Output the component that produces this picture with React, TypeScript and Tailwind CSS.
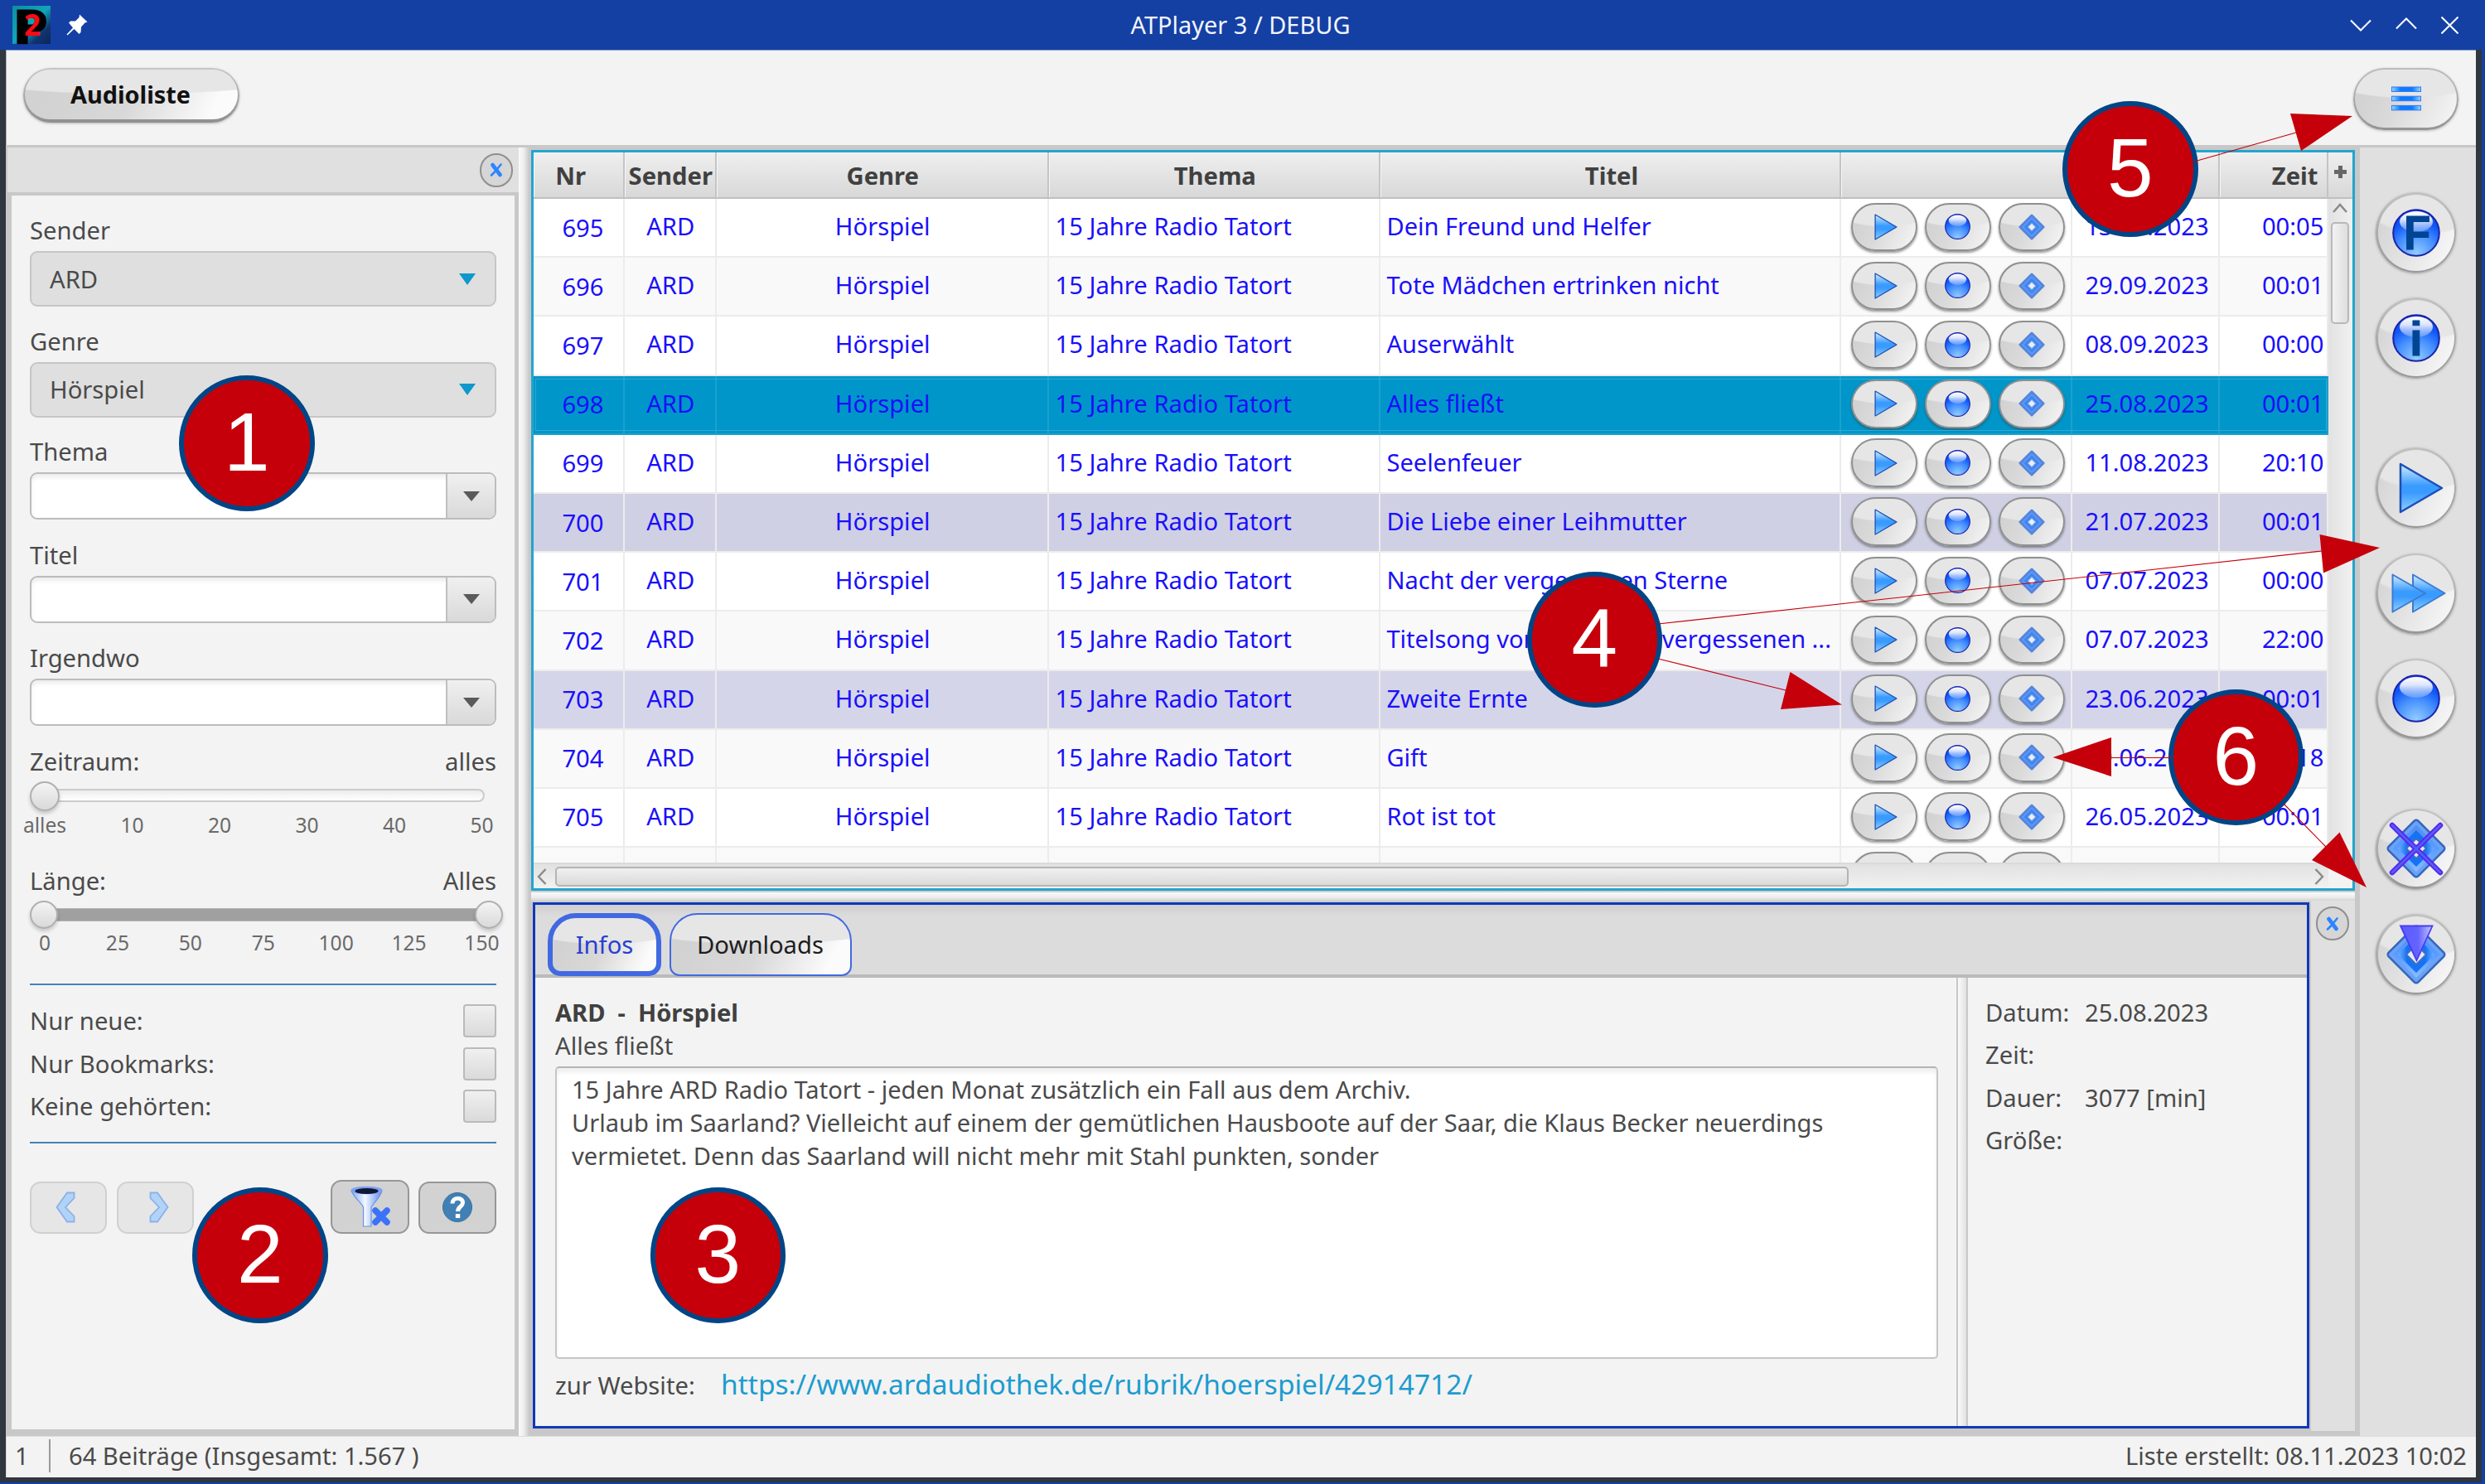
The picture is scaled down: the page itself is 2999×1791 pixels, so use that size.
import React from "react";
import type { ReactNode } from "react";

type Row = { nr: string; titel: string; datum: string; zeit: string; tone: string };

const rows: Row[] = [
  { nr: "695", titel: "Dein Freund und Helfer", datum: "13.10.2023", zeit: "00:05", tone: "bg-white" },
  { nr: "696", titel: "Tote Mädchen ertrinken nicht", datum: "29.09.2023", zeit: "00:01", tone: "bg-[#f9f9f9]" },
  { nr: "697", titel: "Auserwählt", datum: "08.09.2023", zeit: "00:00", tone: "bg-white" },
  { nr: "698", titel: "Alles fließt", datum: "25.08.2023", zeit: "00:01", tone: "selected" },
  { nr: "699", titel: "Seelenfeuer", datum: "11.08.2023", zeit: "20:10", tone: "bg-white" },
  { nr: "700", titel: "Die Liebe einer Leihmutter", datum: "21.07.2023", zeit: "00:01", tone: "bg-[#d0d0e4]" },
  { nr: "701", titel: "Nacht der vergessenen Sterne", datum: "07.07.2023", zeit: "00:00", tone: "bg-white" },
  { nr: "702", titel: "Titelsong von Nacht der vergessenen ...", datum: "07.07.2023", zeit: "22:00", tone: "bg-[#f9f9f9]" },
  { nr: "703", titel: "Zweite Ernte", datum: "23.06.2023", zeit: "00:01", tone: "bg-[#d5d5e9]" },
  { nr: "704", titel: "Gift", datum: "09.06.2023", zeit: "00:18", tone: "bg-[#f9f9f9]" },
  { nr: "705", titel: "Rot ist tot", datum: "26.05.2023", zeit: "00:01", tone: "bg-white" },
];

const columns = "grid grid-cols-[109.5px_111.5px_400.5px_400.5px_556px_279px_178px_130.5px]";
const gloss =
  "bg-[radial-gradient(ellipse_90%_50%_at_50%_0%,#e6e6e6_96%,transparent_100%),linear-gradient(115deg,#d2d2d2_15%,#d8d8d8_50%,#fbfbfb_88%)]";
const softGloss =
  "bg-[radial-gradient(ellipse_90%_50%_at_50%_0%,#e6e6e6_94%,transparent_100%),linear-gradient(115deg,#d2d2d2_15%,#dadada_45%,#f4f4f4_95%)]";

function Defs() {
  return (
    <svg className="absolute h-0 w-0" aria-hidden="true">
      <defs>
        <linearGradient id="playFill" x1="0" y1="0" x2="0" y2="1">
          <stop offset="0" stopColor="#d5efff" />
          <stop offset="0.45" stopColor="#3a9bff" />
          <stop offset="0.6" stopColor="#3a9bff" />
          <stop offset="1" stopColor="#8fd0ff" />
        </linearGradient>
        <radialGradient id="ballFill" cx="0.5" cy="0.95" r="0.85">
          <stop offset="0" stopColor="#93ccff" />
          <stop offset="0.5" stopColor="#4690ff" />
          <stop offset="0.85" stopColor="#0d55f5" />
          <stop offset="1" stopColor="#1a4cf0" />
        </radialGradient>
        <linearGradient id="ballShine" x1="0" y1="0" x2="0" y2="1">
          <stop offset="0" stopColor="#ffffff" />
          <stop offset="0.4" stopColor="#ffffff" stopOpacity="0.85" />
          <stop offset="1" stopColor="#ffffff" stopOpacity="0.2" />
        </linearGradient>
        <linearGradient id="diamondFill" x1="0" y1="0" x2="0" y2="1">
          <stop offset="0" stopColor="#4f8cf0" />
          <stop offset="0.5" stopColor="#5a9bff" />
          <stop offset="1" stopColor="#8fc0ff" />
        </linearGradient>
        <linearGradient id="diamondInner" x1="0" y1="0" x2="1" y2="0">
          <stop offset="0" stopColor="#6fb2ff" />
          <stop offset="0.25" stopColor="#1572f5" />
          <stop offset="0.75" stopColor="#1572f5" />
          <stop offset="1" stopColor="#6fb2ff" />
        </linearGradient>
        <linearGradient id="barFill" x1="0" y1="0" x2="1" y2="0">
          <stop offset="0" stopColor="#8fd8ff" />
          <stop offset="0.3" stopColor="#0a7cff" />
          <stop offset="0.7" stopColor="#0a7cff" />
          <stop offset="1" stopColor="#8fd8ff" />
        </linearGradient>
        <linearGradient id="arrowFill" x1="0" y1="0" x2="1" y2="0">
          <stop offset="0" stopColor="#5b5bff" />
          <stop offset="0.55" stopColor="#6363ff" />
          <stop offset="1" stopColor="#c9c9ff" />
        </linearGradient>
        <linearGradient id="funnelFill" x1="0" y1="0" x2="1" y2="0">
          <stop offset="0" stopColor="#7ea6f7" />
          <stop offset="0.45" stopColor="#f2f8ff" />
          <stop offset="1" stopColor="#5f8cf0" />
        </linearGradient>
        <linearGradient id="logoFill" x1="0" y1="0" x2="1" y2="1">
          <stop offset="0" stopColor="#0c8fa3" />
          <stop offset="0.5" stopColor="#12a5b8" />
          <stop offset="0.75" stopColor="#10356f" />
          <stop offset="1" stopColor="#0d2558" />
        </linearGradient>
      </defs>
    </svg>
  );
}

function PlayIcon({ className }: { className: string }) {
  return (
    <svg className={className} viewBox="0 0 54 62">
      <path d="M2 2 52 31 2 60Z" fill="url(#playFill)" stroke="#1d4fb5" strokeWidth="2.5" strokeLinejoin="round" />
    </svg>
  );
}

function BallIcon({ className, letter }: { className: string; letter?: string }) {
  return (
    <svg className={`overflow-visible ${className}`} viewBox="0 0 58 58">
      <circle cx="29" cy="29" r="27.8" fill="url(#ballFill)" stroke="#1c22a8" strokeWidth="2" />
      <ellipse cx="29" cy="15.5" rx="20" ry="12.5" fill="url(#ballShine)" />
      {letter === "F" && (
        <text x="32.5" y="49" transform="scale(.93 1)" textAnchor="middle" fill="#004494" stroke="#004494" strokeWidth="1" className="font-['Liberation_Sans'] text-[57px] font-bold">F</text>
      )}
      {letter === "i" && (
        <text x="29" y="50" textAnchor="middle" fill="#004494" stroke="#004494" strokeWidth="1" className="font-['Liberation_Sans'] text-[57px] font-bold">i</text>
      )}
    </svg>
  );
}

function Diamond() {
  return (
    <>
      <path d="M36 5 67 36 36 67 5 36Z" fill="url(#diamondFill)" stroke="#3566bd" strokeWidth="9" strokeLinejoin="round" />
      <path d="M36 5 67 36 36 67 5 36Z" fill="url(#diamondFill)" stroke="#6aa2f6" strokeWidth="4" strokeLinejoin="round" />
      <path d="M36 14 58 36 36 58 14 36Z" fill="url(#diamondInner)" />
      <path d="M36 24 48 36 36 48 24 36Z" fill="#e4e8f2" stroke="#3d6fc0" strokeWidth="2" />
    </>
  );
}

function SmallDiamond() {
  return (
    <svg className="h-8 w-8" viewBox="0 0 32 32">
      <path d="M16 2 30 16 16 30 2 16Z" fill="#5d9af8" stroke="#5585dc" strokeWidth="3" strokeLinejoin="round" />
      <path d="M16 6.5 25.5 16 16 25.5 6.5 16Z" fill="#3d84f2" />
      <path d="M16 11 21 16 16 21 11 16Z" fill="#eceef4" stroke="#6b9ae6" strokeWidth="1.2" strokeLinejoin="round" />
    </svg>
  );
}

function CloseButton() {
  return (
    <div className="flex h-[41px] w-[40px] items-center justify-center rounded-full border-[2.5px] border-[#8f8f8f] bg-[#d6d6d6]">
      <svg className="h-[18px] w-4" viewBox="0 0 16 18" fill="none" stroke="#2b86ff">
        <path d="M3.5 3 12.5 15" strokeWidth="4.6" strokeLinecap="round" />
        <path d="M13.5 2.5 9 8M7 10.5 2 15.5" strokeWidth="2.6" strokeLinecap="round" />
      </svg>
    </div>
  );
}

function RowButton({ children }: { children: ReactNode }) {
  return (
    <div className={`flex h-[58.5px] w-[79.5px] items-center justify-center rounded-[30px] border-[2.5px] border-[#8e9090] shadow-[0_2px_3px_rgba(60,60,60,0.55)] ${softGloss}`}>
      {children}
    </div>
  );
}

function RowButtons() {
  return (
    <div className="flex gap-[9.7px] pt-[4.5px] pl-3">
      <RowButton>
        <PlayIcon className="ml-1 h-8 w-[28px]" />
      </RowButton>
      <RowButton>
        <BallIcon className="h-[31px] w-[31px]" />
      </RowButton>
      <RowButton>
        <SmallDiamond />
      </RowButton>
    </div>
  );
}

function HeadCell({ children, className = "" }: { children?: ReactNode; className?: string }) {
  return (
    <div className={`flex items-center border-r-2 border-[#c4c4c4] pt-px shadow-[inset_1px_1px_0_#f6f6f6] ${className}`}>{children}</div>
  );
}

function TableRow({ row }: { row: Row }) {
  const selected = row.tone === "selected";
  const line = selected ? "border-[#1ba0ce]" : "border-[#ececec]";
  const cell = `flex items-center border-r-2 pb-[3px] ${line}`;
  return (
    <div className={`relative h-[71.2px] shrink-0 border-b-2 ${columns} ${selected ? "border-[#1ba0ce] bg-[#0096c9]" : `border-[#ececec] ${row.tone}`}`}>
      {selected && <div className="absolute inset-x-0.5 inset-y-[3px] border border-[#2fa7d3]" />}
      <div className={`flex items-center justify-end border-r-2 pr-[23px] ${line}`}>{row.nr}</div>
      <div className={`${cell} justify-center pl-0.5`}>ARD</div>
      <div className={`${cell} justify-center pl-0.5`}>Hörspiel</div>
      <div className={`${cell} pl-[8px]`}>15 Jahre Radio Tatort</div>
      <div className={`${cell} pl-[7.5px] text-[29px] whitespace-nowrap`}>{row.titel}</div>
      <div className={`border-r-2 ${line}`}>
        <RowButtons />
      </div>
      <div className={`${cell} justify-center pl-1`}>{row.datum}</div>
      <div className={`${cell} justify-end pr-[3px]`}>{row.zeit}</div>
    </div>
  );
}

function Choice({ label, value }: { label: string; value: string }) {
  return (
    <div className="h-[133.6px]">
      <div className="h-[45px] leading-10">{label}</div>
      <div className="flex h-[67px] items-center justify-between rounded-[9px] border-2 border-[#c6c6c6] bg-[#dfdfdf] pr-[23px] pl-[22px]">
        <span className="leading-10">{value}</span>
        <svg className="h-3.5 w-5" viewBox="0 0 20 14">
          <path d="M0 0H20L10 14Z" fill="#0e98cb" />
        </svg>
      </div>
    </div>
  );
}

function Editable({ label }: { label: string }) {
  return (
    <div className="h-[124.6px]">
      <div className="h-[45px] leading-10">{label}</div>
      <div className="flex h-[57px] rounded-[9px] border-2 border-[#bcbcbc] bg-white shadow-[inset_0_4px_5px_#ededed]">
        <div className="flex-1" />
        <div className="flex w-[59px] items-center justify-center rounded-r-[7px] border-l-2 border-[#c0c0c0] bg-linear-to-b from-[#f0f0f0] to-[#d9d9d9]">
          <svg className="h-3 w-5" viewBox="0 0 20 12">
            <path d="M0 0H20L10 12Z" fill="#5a5a5a" />
          </svg>
        </div>
      </div>
    </div>
  );
}

function Ticks({ values }: { values: string[] }) {
  return (
    <div className="mr-[17.5px] ml-[18px] flex justify-between text-[24.6px] leading-[34px] text-[#6a6a6a]">
      {values.map((v) => (
        <div key={v} className="flex w-0 justify-center">
          {v}
        </div>
      ))}
    </div>
  );
}

const thumb =
  "rounded-full border-2 border-[#b0b0b0] bg-linear-to-b from-[#f4f4f4] to-[#d9d9d9] shadow-[0_3px_4px_rgba(0,0,0,0.18)]";

function CheckLine({ label }: { label: string }) {
  return (
    <div className="flex h-[51.4px] items-center justify-between">
      <span className="leading-10">{label}</span>
      <div className="h-10 w-10 rounded border-2 border-[#bababa] bg-linear-to-b from-[#f0f0f0] to-[#dadada]" />
    </div>
  );
}

function FilterPanel() {
  return (
    <div className="flex w-[618px] flex-col border-l border-[#c8c8c8]">
      <div className="flex h-[54px] items-center justify-end bg-[#e0e0e0] pr-[7px]">
        <CloseButton />
      </div>
      <div className="flex-1 border-4 border-r-[5px] border-b-8 border-l-[5px] border-[#c8c8c8] bg-[#f3f3f3]">
        <div className="flex w-[585px] flex-col pt-[22px] pl-[22px]">
          <Choice label="Sender" value="ARD" />
          <Choice label="Genre" value="Hörspiel" />
          <Editable label="Thema" />
          <Editable label="Titel" />
          <Editable label="Irgendwo" />
          <div className="flex justify-between leading-10">
            <span>Zeitraum:</span>
            <span>alles</span>
          </div>
          <div className="relative flex h-10 items-center pt-0.5">
            <div className="mr-[14px] ml-4 h-4 flex-1 rounded-full border-2 border-[#cbcbcb] bg-linear-to-b from-[#ececec] to-white" />
            <div className={`absolute top-[4px] left-0 h-[36px] w-[36px] ${thumb}`} />
          </div>
          <Ticks values={["alles", "10", "20", "30", "40", "50"]} />
          <div className="mt-[30.500px] flex justify-between leading-10">
            <span>Länge:</span>
            <span>Alles</span>
          </div>
          <div className="relative flex h-[38px] items-center pt-[3px]">
            <div className="mr-[8px] ml-4 h-4 flex-1 border-y border-[#b5b5b5] bg-[#a0a0a0]" />
            <div className={`absolute top-[4px] left-0 h-[34px] w-[34px] ${thumb}`} />
            <div className={`absolute top-[4px] -right-2 h-[34px] w-[34px] ${thumb}`} />
          </div>
          <Ticks values={["0", "25", "50", "75", "100", "125", "150"]} />
          <div className="mt-8 h-0.5 bg-[#4183bb]" />
          <div className="my-[17px]">
            <CheckLine label="Nur neue:" />
            <CheckLine label="Nur Bookmarks:" />
            <CheckLine label="Keine gehörten:" />
          </div>
          <div className="h-0.5 bg-[#4183bb]" />
          <div className="mt-[44px] flex h-[65px] items-end">
            <div className="flex h-[63px] w-[93px] items-center justify-center rounded-[13px] border-2 border-[#d0d0d0] bg-[#e6e6e6] pr-2">
              <svg className="h-[38px] w-6" viewBox="0 0 24 38">
                <path d="M14 1.5H22.5V8L12 19 22.5 30V36.5H14L1.5 19Z" fill="#b0d4f8" stroke="#8db0e8" strokeWidth="1.8" />
              </svg>
            </div>
            <div className="ml-3 flex h-[63px] w-[93px] items-center justify-center rounded-[13px] border-2 border-[#d0d0d0] bg-[#e6e6e6] pl-2">
              <svg className="h-[38px] w-6" viewBox="0 0 24 38">
                <path d="M10 1.5H1.5V8L12 19 1.5 30V36.5H10L22.5 19Z" fill="#b0d4f8" stroke="#8db0e8" strokeWidth="1.8" />
              </svg>
            </div>
            <div className="ml-auto flex h-[65px] w-[95px] items-center justify-center rounded-[13px] border-[2.5px] border-[#979797] bg-[#d2d2d2]">
              <svg className="h-[50px] w-[50px]" viewBox="0 0 50 50">
                <path d="M2 6C6 16 14 20 16.500 26V49H26V26C29 20 36 16 39 6Z" fill="url(#funnelFill)" stroke="#6e93e6" strokeWidth="1.2" />
                <ellipse cx="20.500" cy="5.500" rx="19" ry="4.800" fill="#7fa2f2" />
                <ellipse cx="20.500" cy="6.500" rx="14" ry="3.400" fill="#101838" />
                <path d="M31 30 45 44M45 30 31 44" stroke="#3c72f8" strokeWidth="7.500" strokeLinecap="round" />
              </svg>
            </div>
            <div className="ml-[11px] flex h-[63px] w-[94px] items-center justify-center rounded-[13px] border-[2.5px] border-[#979797] bg-[#d2d2d2]">
              <svg className="h-[38px] w-[38px]" viewBox="0 0 38 38">
                <circle cx="19" cy="19" r="17.500" fill="#4080b4" stroke="#3a6f9e" />
                <path d="M13 14.500C13 6.500 25.500 6.500 25.500 13.500 25.500 18 19.500 18.500 19.500 24" fill="none" stroke="#fff" strokeWidth="5" />
                <path d="M16.800 27H22.200V32H16.800Z" fill="#fff" />
              </svg>
            </div>
          </div>
        </div>
      </div>
    </div>
  );
}

function Table() {
  return (
    <div className="flex h-[894px] w-[2201px] flex-col border-[3px] border-[#22a5cf] bg-white">
      <div className="flex h-[56px] border-b-2 border-[#c0c0c0] bg-linear-to-b from-[#efefef] to-[#d8d8d8] font-bold text-[#404040]">
        <div className={columns}>
          <HeadCell className="justify-center pr-[18px]">Nr</HeadCell>
          <HeadCell className="justify-center pl-0.5">Sender</HeadCell>
          <HeadCell className="justify-center pl-0.5">Genre</HeadCell>
          <HeadCell className="justify-center pl-[3px]">Thema</HeadCell>
          <HeadCell className="justify-center pl-[4px]">Titel</HeadCell>
          <HeadCell />
          <HeadCell />
          <HeadCell className="justify-end pr-[10px]">Zeit</HeadCell>
        </div>
        <div className="flex flex-1 justify-center pt-[16px]">
          <svg className="h-[15px] w-[15px]" viewBox="0 0 15 15">
            <path d="M7.500 0V15M0 7.500H15" stroke="#666" strokeWidth="5" />
          </svg>
        </div>
      </div>
      <div className="flex h-[801px]">
        <div className="flex w-[2165.500px] flex-col overflow-hidden text-[#1a0ffa]">
          {rows.map((r) => (
            <TableRow key={r.nr} row={r} />
          ))}
          <div className={`h-[71.2px] shrink-0 bg-[#f9f9f9] ${columns}`}>
            {[0, 1, 2, 3, 4].map((i) => (
              <div key={i} className="border-r-2 border-[#ececec]" />
            ))}
            <div className="border-r-2 border-[#ececec]">
              <RowButtons />
            </div>
            <div className="border-r-2 border-[#ececec]" />
            <div className="border-r-2 border-[#ececec]" />
          </div>
        </div>
        <div className="flex flex-1 flex-col items-center bg-linear-to-r from-[#e2e2e2] to-[#f1f1f1] pt-[5px]">
          <svg className="h-3 w-[18px]" viewBox="0 0 18 12">
            <path d="M1 11 9 2 17 11" fill="none" stroke="#8b8b8b" strokeWidth="2.500" />
          </svg>
          <div className="mt-[11px] h-[123px] w-[22px] rounded-[5px] border-2 border-[#b8b8b8] bg-linear-to-r from-[#f2f2f2] to-[#dedede]" />
        </div>
      </div>
      <div className="flex flex-1 border-t-2 border-[#dadada] bg-linear-to-b from-[#e2e2e2] to-[#f1f1f1]">
        <div className="flex w-[2165.500px] items-center pl-1">
          <svg className="h-5 w-3" viewBox="0 0 12 20">
            <path d="M10.500 1 2 10 10.500 19" fill="none" stroke="#8b8b8b" strokeWidth="2.500" />
          </svg>
          <div className="ml-[10px] h-6 w-[1561px] rounded-[5px] border-2 border-[#b4b4b4] bg-linear-to-b from-[#f0f0f0] to-[#dadada]" />
          <svg className="mr-[5px] ml-auto h-5 w-3" viewBox="0 0 12 20">
            <path d="M1.500 1 10 10 1.500 19" fill="none" stroke="#8b8b8b" strokeWidth="2.500" />
          </svg>
        </div>
        <div className="flex-1 bg-[#f3f3f3]" />
      </div>
    </div>
  );
}

function InfoPanel() {
  return (
    <div className="flex h-[635px] w-[2143.500px] flex-col border-[3px] border-[#1038b8] bg-[#f3f3f3]">
      <div className="flex h-[88px] gap-[9.5px] border-b-4 border-[#bababa] bg-[linear-gradient(#cfcfcf,#dcdcdc_14px)] pt-[10px] pl-[15px]">
        <div className={`flex h-[76px] w-[137px] items-center justify-center rounded-[34px_34px_15px_15px] border-6 border-[#4169e1] text-[#2a3fd0] ${gloss}`}>Infos</div>
        <div className={`flex h-[76px] w-[220px] items-center justify-center rounded-[34px_34px_12px_12px] border-2 border-[#4169e1] text-[#1e1e1e] ${gloss}`}>Downloads</div>
      </div>
      <div className="flex flex-1">
        <div className="flex w-[1715px] flex-col pt-[22px] pl-6">
          <div className="text-[29.060px] leading-10 font-bold whitespace-pre text-[#404040]">ARD  -  Hörspiel</div>
          <div className="leading-10">Alles fließt</div>
          <div className="mt-[5px] h-[353px] w-[1669px] rounded-[5px] border-2 border-[#c6c6c6] border-t-[#b4b4b4] bg-white pt-1.5 pl-[18px] text-[29.06px] leading-10 shadow-[inset_0_5px_5px_#efefef]">
            <div>15 Jahre ARD Radio Tatort - jeden Monat zusätzlich ein Fall aus dem Archiv.</div>
            <div>Urlaub im Saarland? Vielleicht auf einem der gemütlichen Hausboote auf der Saar, die Klaus Becker neuerdings</div>
            <div>vermietet. Denn das Saarland will nicht mehr mit Stahl punkten, sonder</div>
          </div>
          <div className="mt-[7px] flex items-baseline">
            <span className="w-[200px]">zur Website:</span>
            <span className="text-[33.5px] leading-[46px] text-[#1c9ccf]">https://www.ardaudiothek.de/rubrik/hoerspiel/42914712/</span>
          </div>
        </div>
        <div className="w-3.5 border-x-2 border-[#c8c8c8] bg-linear-to-r from-[#fafafa] to-[#e2e2e2]" />
        <div className="grid flex-1 grid-cols-[120px_1fr] content-start pt-[17px] pl-[21px] leading-[51.3px]">
          <span>Datum:</span>
          <span>25.08.2023</span>
          <span>Zeit:</span>
          <span />
          <span>Dauer:</span>
          <span>3077 [min]</span>
          <span>Größe:</span>
          <span />
        </div>
      </div>
    </div>
  );
}

function SideButton({ children, className = "" }: { children: ReactNode; className?: string }) {
  return (
    <div className={`h-[97px] w-[97px] rounded-full bg-linear-to-b from-[#c2c2c2] to-[#979797] p-[2.5px] shadow-[0_1px_3px_rgba(90,90,90,0.5)] ${className}`}>
      <div className="flex h-full w-full items-center justify-center rounded-full bg-[radial-gradient(ellipse_90%_52%_at_62%_0%,#e6e6e6_94%,transparent_100%),linear-gradient(115deg,#d4d4d4_10%,#e2e2e2_45%,#f4f4f4_85%)]">
        {children}
      </div>
    </div>
  );
}

function SideBar() {
  return (
    <div className="flex flex-1 flex-col items-center gap-[30.2px] bg-[#e0e0e0] pt-[54px] pr-[5px]">
      <SideButton>
        <BallIcon className="h-[58px] w-[58px]" letter="F" />
      </SideButton>
      <SideButton>
        <BallIcon className="h-[58px] w-[58px]" letter="i" />
      </SideButton>
      <SideButton className="mt-[54px]">
        <PlayIcon className="ml-[12px] h-[62px] w-[54px]" />
      </SideButton>
      <SideButton>
        <svg className="ml-[6px] h-[48px] w-[66px]" viewBox="0 0 66 48">
          <path d="M26 1.500 64.500 24 26 46.500Z" fill="url(#playFill)" stroke="#3d7bd0" strokeWidth="2" strokeLinejoin="round" />
          <path d="M1.500 1.500 41 24 1.500 46.500Z" fill="url(#playFill)" stroke="#3d7bd0" strokeWidth="2" strokeLinejoin="round" />
        </svg>
      </SideButton>
      <SideButton>
        <BallIcon className="h-[58px] w-[58px]" />
      </SideButton>
      <SideButton className="mt-[54px]">
        <svg className="h-[72px] w-[72px]" viewBox="0 0 72 72">
          <Diamond />
          <path d="M7 8 65 65M65 8 7 65" stroke="#5a24f5" strokeWidth="6.500" strokeLinecap="round" />
          <path d="M7 8 65 65M65 8 7 65" stroke="#4f62ee" strokeWidth="2.500" strokeLinecap="round" />
        </svg>
      </SideButton>
      <SideButton>
        <svg className="h-[72px] w-[72px]" viewBox="0 0 72 72">
          <Diamond />
          <path d="M17 1.500H55.500L36.500 43Z" fill="url(#arrowFill)" stroke="#4a3cf2" strokeWidth="1.800" />
        </svg>
      </SideButton>
    </div>
  );
}

function Badge({ n, place }: { n: string; place: string }) {
  return (
    <div className={`absolute flex h-[163.5px] w-[163.5px] items-center justify-center rounded-full border-6 border-[#004586] bg-[#c5000b] pb-1 font-['Liberation_Sans'] text-[100px] leading-none text-white ${place}`}>
      {n}
    </div>
  );
}

function Annotations() {
  return (
    <>
      <Badge n="1" place="left-[216px] top-[453px]" />
      <Badge n="2" place="left-[232px] top-[1433px]" />
      <Badge n="3" place="left-[784.5px] top-[1433px]" />
      <Badge n="4" place="left-[1842.5px] top-[690px]" />
      <Badge n="5" place="left-[2489px] top-[122px]" />
      <Badge n="6" place="left-[2616.5px] top-[832px]" />
      <svg className="absolute top-0 left-0 h-[1791px] w-[2999px]" viewBox="0 0 2999 1791">
        <path
          d="M2648 195 2771 160M2001 753 2802 665M2001 795 2155 833M2621 914.500H2548M2756 970 2807 1022"
          fill="none"
          stroke="#c5000b"
          strokeWidth="1.100"
        />
        <path
          d="M2839 140 2764 137 2777 182ZM2872 661 2799.500 645 2804 691.500ZM2223 850.500 2160.500 811 2149 856ZM2477.500 914 2548 890V937ZM2856 1071 2823.500 1004.500 2790 1038Z"
          fill="#c5000b"
        />
      </svg>
    </>
  );
}

export default function App() {
  return (
    <div className="relative flex h-[1791px] w-[2999px] flex-col overflow-hidden bg-[#1440a4] font-['Noto_Sans',sans-serif] text-[29.2px] leading-10 text-[#4a4a4a]">
      <Defs />
      <div className="flex h-[60px] items-center">
        <div className="flex flex-1 items-center pl-[15px]">
          <svg className="h-[46px] w-[46px] overflow-visible" viewBox="0 0 46 46">
            <rect width="46" height="46" fill="url(#logoFill)" />
            <text x="2" y="45" fill="#000" stroke="#000" strokeWidth="3" className="font-['DejaVu_Sans'] text-[54px] font-bold">P</text>
            <text x="14" y="36" fill="#ff0a12" className="font-['Noto_Sans'] text-[35px] font-bold">2</text>
          </svg>
          <svg className="ml-[19px] h-[26px] w-[26px]" viewBox="0 0 26 26" fill="#fff">
            <path d="M16 0.500 25.500 9.500 22.500 10.500 18 15.500 17.500 22 15.500 24 9.500 18 1.500 25.500 0.500 24.500 8 16.500 3 10.500 5 8.500 11 8.500 15.500 4Z" />
          </svg>
        </div>
        <div className="-mt-px -mr-[6px] pl-[6px] text-[28.95px] text-[#f2f5fc]">ATPlayer 3 / DEBUG</div>
        <div className="flex flex-1 items-center justify-end gap-[29px] pr-8">
          <svg className="h-[15px] w-[26px]" viewBox="0 0 26 15">
            <path d="M1 1.500 13 13.500 25 1.500" fill="none" stroke="#fff" strokeWidth="2" />
          </svg>
          <svg className="mb-1 h-[15px] w-[26px]" viewBox="0 0 26 15">
            <path d="M1 13.500 13 1.500 25 13.500" fill="none" stroke="#fff" strokeWidth="2" />
          </svg>
          <svg className="h-[21px] w-[21px]" viewBox="0 0 21 21">
            <path d="M0.500 0.500 20.500 20.500M20.500 0.500 0.500 20.500" fill="none" stroke="#fff" strokeWidth="2" />
          </svg>
        </div>
      </div>
      <div className="mr-1 flex h-[1728.500px] flex-col border-r-[7px] border-b-[6.500px] border-l-[7px] border-[#30373e] bg-[#f3f3f3]">
        <div className="h-px bg-[#7f98cf]" />
        <div className="flex h-[114px] items-start justify-between border-l border-[#b0b0b0] pt-[21px] pr-[21px] pl-5">
          <div className="h-[66px] w-[261px] rounded-full bg-linear-to-b from-[#c6c6c6] to-[#8f8f8f] p-0.5 pb-1 shadow-[0_1px_3px_rgba(90,90,90,0.4)]">
            <div className={`flex h-full items-center justify-center rounded-full font-bold text-[#111] ${gloss}`}>
              <span className="pr-0.5 text-[28.800px]">Audioliste</span>
            </div>
          </div>
          <div className="h-[75px] w-[127px] rounded-[38px] bg-linear-to-b from-[#bdbdbd] to-[#949494] p-0.5 pb-[3px] shadow-[0_1px_3px_rgba(90,90,90,0.4)]">
            <div className={`flex h-full items-center justify-center rounded-[36px] ${softGloss}`}>
              <svg className="h-[30px] w-9" viewBox="0 0 36 30" fill="url(#barFill)" stroke="#3d74ee" strokeWidth="1">
                <rect x="0.500" y="1" width="35" height="5.500" />
                <rect x="0.500" y="12.200" width="35" height="5.500" />
                <rect x="0.500" y="23.400" width="35" height="5.500" />
              </svg>
            </div>
          </div>
        </div>
        <div className="flex h-[1558px] border-t-[3px] border-l border-[#c8c8c8] bg-[#c8c8c8]">
          <FilterPanel />
          <div className="mr-[3px] w-3 bg-linear-to-r from-[#fafafa] via-[#eeeeee] to-[#cccccc]" />
          <div className="flex w-[2201px] flex-col pt-[3px]">
            <Table />
            <div className="h-[14px] border-t-2 border-[#cfcfcf] bg-linear-to-b from-[#fafafa] via-[#ececec] to-[#c8c8c8]" />
            <div className="flex h-[641px] gap-0.5">
              <div className="pl-0.5">
                <InfoPanel />
              </div>
              <div className="-mt-0.5 flex h-[640px] flex-1 justify-center bg-[#e0e0e0] pt-[7px]">
                <CloseButton />
              </div>
            </div>
          </div>
          <div className="w-1.5" />
          <SideBar />
        </div>
        <div className="flex flex-1 items-center border-t border-l border-[#dcdcdc] pb-0.5 text-[29.1px]">
          <span className="w-[51px] pl-2.5">1</span>
          <div className="h-10 w-0.5 bg-[#9a9a9a]" />
          <span className="ml-[22px]">64 Beiträge (Insgesamt: 1.567 )</span>
          <span className="mr-[11px] ml-auto">Liste erstellt: 08.11.2023 10:02</span>
        </div>
      </div>
      <Annotations />
    </div>
  );
}
